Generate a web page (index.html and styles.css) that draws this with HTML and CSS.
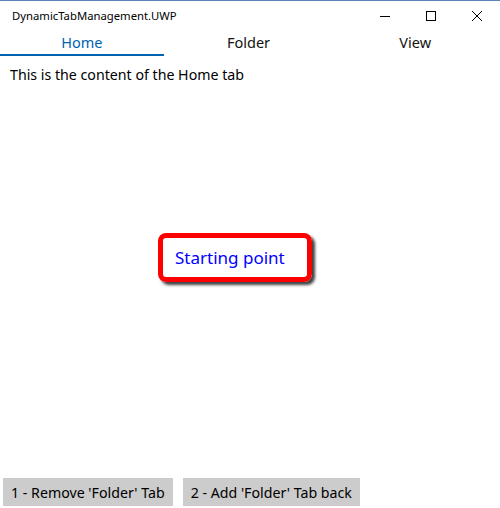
FILE: index.html
```html
<!DOCTYPE html>
<html>
<head>
<meta charset="utf-8">
<link rel="stylesheet" href="styles.css">
</head>
<body>
<div class="window">
  <div class="titlebar">
    <div class="title">DynamicTabManagement.UWP</div>
    <div class="controls">
      <div class="ctl"><svg width="10" height="10" viewBox="0 0 10 10"><path d="M0 5.5H10" stroke="#000" stroke-width="1"/></svg></div>
      <div class="ctl"><svg width="10" height="10" viewBox="0 0 10 10"><rect x="0.5" y="0.5" width="9" height="9" fill="none" stroke="#000" stroke-width="1"/></svg></div>
      <div class="ctl"><svg width="10" height="10" viewBox="0 0 10 10"><path d="M0 0L10 10M10 0L0 10" stroke="#000" stroke-width="1"/></svg></div>
    </div>
  </div>
  <div class="tabs">
    <div class="tab active">Home</div>
    <div class="tab">Folder</div>
    <div class="tab">View</div>
  </div>
  <div class="content">
    <div class="text">This is the content of the Home tab</div>
    <div class="stage">
      <div class="box">Starting point</div>
    </div>
  </div>
  <div class="buttons">
    <div class="btn">1 - Remove 'Folder' Tab</div>
    <div class="btn">2 - Add 'Folder' Tab back</div>
  </div>
</div>
</body>
</html>
```
FILE: styles.css
```css
html, body {
  margin: 0;
  padding: 0;
  background: #fff;
}
body {
  font-family: "Noto Sans", "Open Sans", sans-serif;
  color: #000;
}
.window {
  width: 500px;
  height: 508px;
  display: flex;
  flex-direction: column;
  border-top: 1px solid #5e85b8;
  box-sizing: border-box;
}
.titlebar {
  height: 31px;
  display: flex;
  align-items: center;
  justify-content: space-between;
}
.title {
  font-size: 11.3px;
  padding-left: 12px;
  margin-top: -3px;
}
.controls {
  display: flex;
  height: 100%;
}
.ctl {
  width: 46px;
  display: flex;
  align-items: center;
  justify-content: center;
  margin-top: -2px;
}
.ctl svg { display: block; }
.tabs {
  display: grid;
  grid-template-columns: 1fr 1fr 1fr;
  height: 24px;
}
.tab {
  text-align: center;
  font-size: 14.5px;
  line-height: 21px;
  color: #111;
  box-sizing: border-box;
  margin-right: 3px;
}
.tab.active {
  color: #0063b1;
  border-bottom: 2px solid #0063b1;
}
.content {
  flex: 1;
  display: flex;
  flex-direction: column;
}
.text {
  font-size: 14.2px;
  padding: 9px 0 0 10px;
  line-height: 20px;
}
.stage {
  flex: 1;
  display: flex;
  align-items: center;
  justify-content: center;
  padding-right: 30px;
  padding-bottom: 49px;
}
.box {
  border: 5px solid #ff0000;
  border-radius: 8px;
  width: 132px;
  height: 39px;
  box-sizing: content-box;
  display: flex;
  align-items: center;
  padding-left: 12px;
  font-size: 17px;
  color: #0000ff;
  box-shadow: 3px 3px 3px rgba(0,0,0,0.75);
}
.buttons {
  display: flex;
  gap: 10px;
  padding: 0 0 2px 3px;
}
.btn {
  background: #cccccc;
  height: 28px;
  display: flex;
  align-items: center;
  padding: 0 8px;
  font-size: 14.2px;
}
```
